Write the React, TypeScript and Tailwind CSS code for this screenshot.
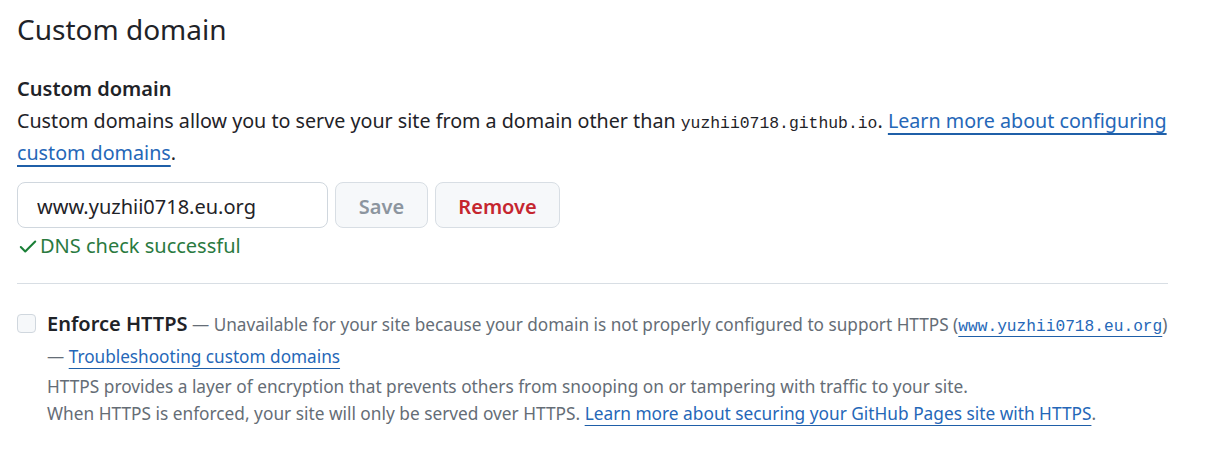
import { useState } from "react";

const sans = "font-['Segoe_UI','Noto_Sans',sans-serif]";
const mono = "font-['Liberation_Mono',monospace]";

function CheckIcon() {
  return (
    <svg width="22" height="22" viewBox="0 0 16 16" className="fill-[#1a7f37] shrink-0">
      <path d="M13.78 4.22a.75.75 0 0 1 0 1.06l-7.25 7.25a.75.75 0 0 1-1.06 0L2.22 9.28a.751.751 0 0 1 .018-1.042.751.751 0 0 1 1.042-.018L6 10.94l6.72-6.72a.75.75 0 0 1 1.06 0Z" />
    </svg>
  );
}

const link = "text-[#2567b8] underline underline-offset-[5px] decoration-[#1f5fa8]";

export default function App() {
  const [domain, setDomain] = useState("www.yuzhii0718.eu.org");

  return (
    <div className={`${sans} bg-white text-[#1f2328] w-[1227px] h-[469px] pl-[17px] pt-[7px]`}>
      <div className="w-[1151px]">
        <h2 className="text-[28px] leading-[44px] font-normal">Custom domain</h2>

        <div className="mt-[22px]">
          <div className="text-[20px] leading-[32px] font-semibold">Custom domain</div>
          <p className="w-[1168px] text-[19.7px] leading-[32px]">
            Custom domains allow you to serve your site from a domain other than{" "}
            <code className={`${mono} text-[16.4px] leading-none`}>yuzhii0718.github.io</code>.{" "}
            <a href="#" className={`${link} decoration-2`}>
              Learn more about configuring custom domains
            </a>
            .
          </p>
        </div>

        <div className="mt-[13px] flex gap-[7px]">
          <input
            value={domain}
            onChange={(e) => setDomain(e.target.value)}
            className="w-[311px] h-[46px] rounded-[8px] border border-[#d0d7de] pl-[19px] pt-[3px] text-[20px] text-[#1f2328] outline-none"
          />
          <button
            disabled
            className="w-[93px] h-[46px] rounded-[8px] border border-[#d8dee4] bg-[#f6f8fa] pt-[3px] text-[20px] font-semibold text-[#8c959f]"
          >
            Save
          </button>
          <button className="w-[125px] h-[46px] rounded-[8px] border border-[#d8dee4] bg-[#f6f8fa] pt-[3px] text-[20px] font-semibold text-[#c5262f]">
            Remove
          </button>
        </div>

        <div className="mt-[4px] flex items-center gap-[1px] text-[20px] leading-[28px] text-[#2a7a3f]">
          <CheckIcon />
          <span>DNS check successful</span>
        </div>

        <hr className="mt-[23px] border-0 border-t border-[#d8dee4]" />

        <div className="mt-[24px] flex gap-[11px]">
          <div className="pt-[6px]">
            <input
              type="checkbox"
              disabled
              className="appearance-none block w-[19px] h-[19px] rounded-[4px] border border-[#d0d7de] bg-[#f6f8fa]"
            />
          </div>
          <div className="flex-1">
            <p className="leading-[32px]">
              <span className="text-[20px] font-semibold text-[#1f2328]">Enforce HTTPS</span>
              <span className="text-[17.2px] text-[#656d76]">
                {" "}— Unavailable for your site because your domain is not properly configured to support HTTPS (
                <a href="#" className={`${mono} text-[16.2px] leading-none ${link}`}>
                  www.yuzhii0718.eu.org
                </a>
                ) —{" "}
                <a href="#" className={link}>
                  Troubleshooting custom domains
                </a>
              </span>
            </p>
            <p className="text-[17.3px] leading-[27px] text-[#656d76]">
              HTTPS provides a layer of encryption that prevents others from snooping on or tampering with traffic to your site.
              <br />
              When HTTPS is enforced, your site will only be served over HTTPS.{" "}
              <a href="#" className={link}>
                Learn more about securing your GitHub Pages site with HTTPS
              </a>
              .
            </p>
          </div>
        </div>
      </div>
    </div>
  );
}
